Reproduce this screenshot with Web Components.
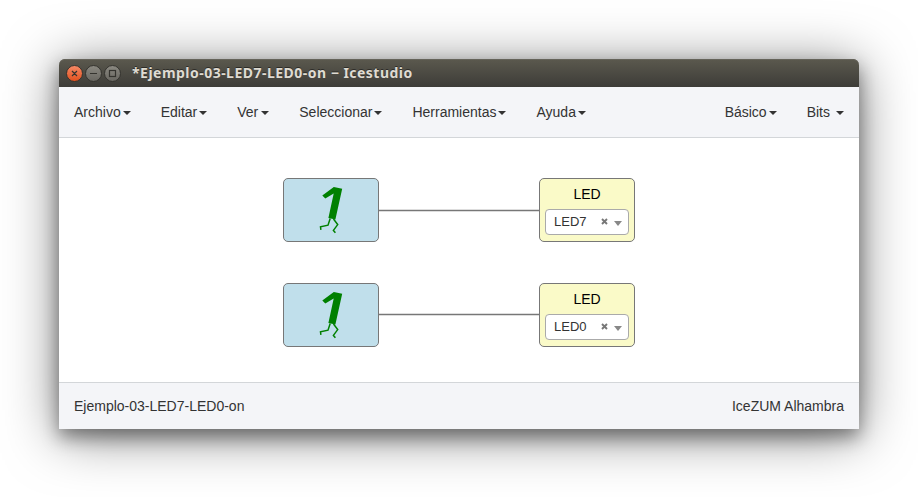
<!DOCTYPE html>
<html lang="es">
<head>
<meta charset="utf-8">
<title>Icestudio</title>
<style>
html, body { margin: 0; height: 100%; }
body { background: #fff; overflow: hidden; font: 14px/20px "Liberation Sans", Arial, sans-serif; color: #333; }
</style>
</head>
<body>
<ice-window>
  <ice-titlebar slot="title">*Ejemplo-03-LED7-LED0-on − Icestudio</ice-titlebar>
  <ice-menubar slot="menu">
    <ice-menu>Archivo</ice-menu><ice-menu>Editar</ice-menu><ice-menu wide>Ver</ice-menu><ice-menu>Seleccionar</ice-menu><ice-menu>Herramientas</ice-menu><ice-menu>Ayuda</ice-menu>
    <ice-menu slot="end">Básico</ice-menu><ice-menu slot="end" spaced>Bits</ice-menu>
  </ice-menubar>
  <ice-canvas>
    <ice-wire style="left:320px;top:71px;width:160px"></ice-wire>
    <ice-wire style="left:320px;top:175px;width:160px"></ice-wire>
    <ice-constant style="left:224px;top:40px"></ice-constant>
    <ice-constant style="left:224px;top:145px"></ice-constant>
    <ice-led style="left:480px;top:40px">LED<ice-select slot="pin">LED7</ice-select></ice-led>
    <ice-led style="left:480px;top:145px">LED<ice-select slot="pin">LED0</ice-select></ice-led>
  </ice-canvas>
  <ice-footer slot="footer">Ejemplo-03-LED7-LED0-on<span slot="board">IceZUM Alhambra</span></ice-footer>
</ice-window>
<script>
function define(name, markup) {
  const template = document.createElement('template');
  template.innerHTML = markup;
  customElements.define(name, class extends HTMLElement {
    constructor() {
      super();
      this.attachShadow({ mode: 'open' }).append(template.content.cloneNode(true));
    }
  });
}

define('ice-window', `<style>
:host { display: flex; flex-direction: column; box-sizing: border-box; width: 800px; height: 370px; margin: 59px 0 0 59px;
  border-radius: 6px 6px 0 0; background: #fff;
  box-shadow: 0 8px 18px rgba(0,0,0,.4), 0 6px 54px rgba(0,0,0,.5); }
</style><slot name="title"></slot><slot name="menu"></slot><slot></slot><slot name="footer"></slot>`);

define('ice-titlebar', `<style>
:host { display: flex; align-items: center; box-sizing: border-box; height: 28px; padding-left: 7px; border-radius: 6px 6px 0 0;
  background: linear-gradient(#5b594e, #3d3c38); box-shadow: inset 0 1px #65635a;
  color: #dfdbd2; font: bold 14px/28px "Noto Sans", sans-serif; letter-spacing: .48px; text-shadow: 0 -1px #2d2c28; white-space: pre; }
svg { display: block; margin-right: 9px; }
</style><svg width="57" height="28" viewBox="0 0 57 28">
<defs>
<linearGradient id="o" x2="0" y2="1"><stop stop-color="#f58a67"/><stop offset="1" stop-color="#e2501d"/></linearGradient>
<linearGradient id="g" x2="0" y2="1"><stop stop-color="#8b8981"/><stop offset="1" stop-color="#686660"/></linearGradient>
</defs>
<g stroke="#34332e"><circle cx="8.5" cy="14.5" r="8" fill="url(#o)"/><circle cx="27.5" cy="14.5" r="8" fill="url(#g)"/><circle cx="46.5" cy="14.5" r="8" fill="url(#g)"/></g>
<g fill="none" stroke="#35342f" stroke-width="1.2"><path d="M6 12l5 5M11 12l-5 5M24 14.5h7" /><rect x="43.5" y="11.5" width="6" height="6"/></g>
</svg><slot></slot>`);

define('ice-menubar', `<style>
:host { display: flex; justify-content: space-between; align-items: center; box-sizing: border-box; height: 51px; padding: 0 15px; background: #f4f5f8; border-bottom: 1px solid #d3d6d9; }
div { display: flex; gap: 30px; }
</style><div><slot></slot></div><div><slot name="end"></slot></div>`);

define('ice-menu', `<style>
:host { display: flex; align-items: center; }
i { width: 0; height: 0; margin-left: 2px; border: 4px solid transparent; border-top-color: #333; border-bottom: 0; position: relative; top: 1px; }
:host([spaced]) i { margin-left: 6px; }
:host([wide]) i { margin-left: 3px; }
</style><span><slot></slot></span><i></i>`);

define('ice-canvas', `<style>
:host { display: block; position: relative; flex: 1; background: #fff; }
::slotted(*) { position: absolute; }
</style><slot></slot>`);

define('ice-wire', `<style>
:host { display: block; box-sizing: border-box; height: 3px; background: #777; border: solid #ddd; border-width: 1px 0; }
</style>`);

define('ice-constant', `<style>
:host { display: block; box-sizing: border-box; width: 96px; height: 64px; border: 1px solid #777; border-radius: 5px; background: #c0dfeb; }
svg { display: block; margin: -1px; }
</style><svg width="96" height="64" viewBox="0 0 96 64">
<path fill="#008000" d="M39.3 17.4L50.8 9l8.4 1.8-6.8 30.7-7-1.5 5.3-24.6-8.4 5.2z"/>
<path fill="none" stroke="#008000" stroke-width="1.5" d="M47.2 40.5L45 47.2l-7.5 1.6.4 3M50.5 41l4.2 5.6-4.3 5.8 2 2.4"/>
</svg>`);

define('ice-led', `<style>
:host { display: flex; flex-direction: column; align-items: center; box-sizing: border-box; width: 96px; height: 64px; padding-top: 5px; border: 1px solid #777; border-radius: 5px; background: #fafac8; color: #000; }
</style><div><slot></slot></div><slot name="pin"></slot>`);

define('ice-select', `<style>
:host { display: flex; align-items: center; box-sizing: border-box; width: 84px; height: 26px; margin-top: 5px; padding: 0 6px 0 8px; border: 1px solid #aaa; border-radius: 4px; background: #fff; color: #333; font-size: 13px; }
span { flex: 1; }
svg { display: block; margin-right: 6px; position: relative; top: -1px; }
i { width: 0; height: 0; border: 4px solid transparent; border-top: 5px solid #888; border-bottom: 0; position: relative; top: 1px; }
</style><span><slot></slot></span><svg width="7" height="7" viewBox="0 0 7 7"><path d="M1 1l5 5M6 1L1 6" stroke="#777" stroke-width="1.9"/></svg><i></i>`);

define('ice-footer', `<style>
:host { display: flex; justify-content: space-between; align-items: center; box-sizing: border-box; height: 47px; padding: 0 15px; background: #f4f5f8; border-top: 1px solid #d3d6d9; }
</style><span><slot></slot></span><slot name="board"></slot>`);
</script>
</body>
</html>
